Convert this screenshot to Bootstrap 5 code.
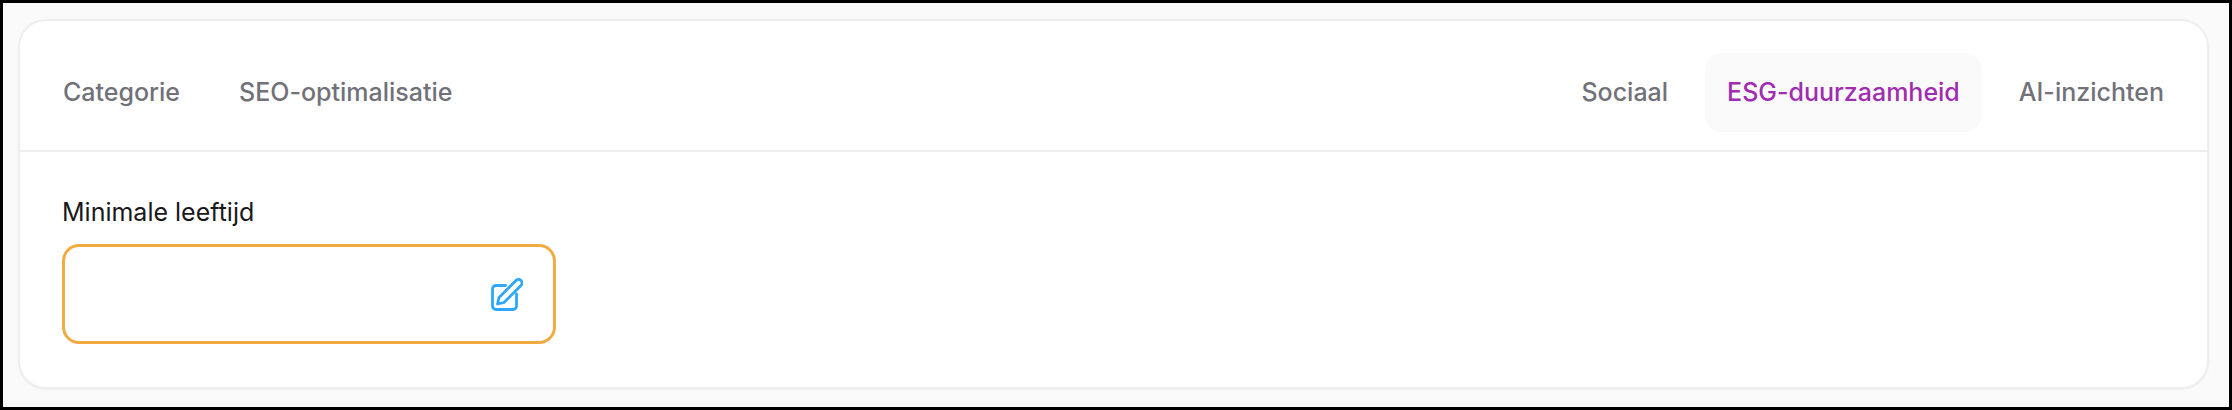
<!DOCTYPE html>
<html lang="nl">
<head>
  <meta charset="UTF-8" />
  <meta name="viewport" content="width=device-width, initial-scale=1" />
  <title>ESG-duurzaamheid</title>
  <link href="https://cdn.jsdelivr.net/npm/bootstrap@5.3.0/dist/css/bootstrap.min.css" rel="stylesheet" />
  <style>
    html, body { height: 100%; }
    body {
      font-family: Inter, "Liberation Sans", sans-serif;
      background-color: #fafafa;
    }
    .page-frame {
      height: 100%;
      border: 3px solid #000;
      padding: 16px 20px 18px 15px;
    }
    .panel {
      height: 100%;
      background: #fff;
      border: 2px solid #eeeeee;
      border-radius: 28px;
      box-shadow: 0 1px 2px rgba(0, 0, 0, .05);
    }
    .tabs-head {
      height: 131px;
      padding: 32px 21px 18px;
      border-bottom: 2px solid #eeeeee;
      gap: 15px;
    }
    .tab-item {
      height: 79px;
      padding: 0 22px;
      font-size: 25px;
      font-weight: 500;
      color: #71717a;
      border-radius: 17px;
      text-decoration: none;
    }
    .tab-item.selected {
      background: #fafafa;
      color: #a02cb0;
    }
    .panel-body {
      padding: 43px 42px 0;
    }
    .field-label {
      font-size: 25px;
      line-height: 34px;
      color: #18181b;
      margin-bottom: 15px;
    }
    .field-box {
      width: 494px;
      height: 100px;
      border: 3px solid #f2ab41;
      border-radius: 17px;
      padding-right: 30px;
    }
  </style>
</head>
<body>
  <div class="page-frame">
    <div class="panel">

      <!-- Tabs -->
      <div class="tabs-head d-flex align-items-center">
        <a class="tab-item d-flex align-items-center" href="#">Categorie</a>
        <a class="tab-item d-flex align-items-center me-auto" href="#">SEO-optimalisatie</a>
        <a class="tab-item d-flex align-items-center" href="#">Sociaal</a>
        <a class="tab-item selected d-flex align-items-center" href="#">ESG-duurzaamheid</a>
        <a class="tab-item d-flex align-items-center" href="#">AI-inzichten</a>
      </div>

      <!-- Veld -->
      <div class="panel-body">
        <div class="field-label">Minimale leeftijd</div>
        <div class="field-box d-flex align-items-center justify-content-end">
          <svg width="32" height="33" viewBox="0 0 32 33" fill="none" stroke="#2ea8ff" stroke-width="2.800" stroke-linecap="round" stroke-linejoin="round">
            <path d="M14.500 7.500H5a3.500 3.500 0 0 0-3.500 3.500v17a3.500 3.500 0 0 0 3.500 3.500h17a3.500 3.500 0 0 0 3.500-3.500V16" />
            <path d="M25 2.500a3.500 3.500 0 0 1 5 5L13 24.500l-6.500 1.500L8 19.500z" />
          </svg>
        </div>
      </div>

    </div>
  </div>
  <script src="https://cdn.jsdelivr.net/npm/bootstrap@5.3.0/dist/js/bootstrap.bundle.min.js"></script>
</body>
</html>
